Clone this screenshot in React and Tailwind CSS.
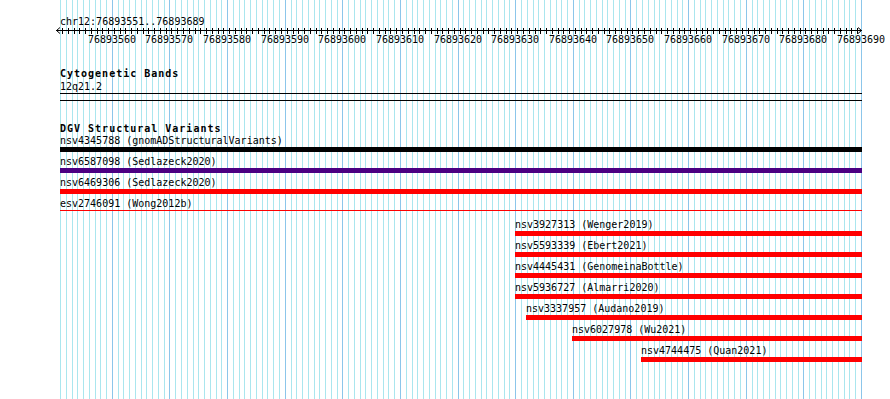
const FIRST = 76893551
const LAST = 76893689
const X0 = 60
const PX = 801 / (LAST - FIRST + 1)

const baseX = i => Math.round(X0 + i * PX)

const ROWS = [
  { label: 'nsv4345788 (gnomADStructuralVariants)', ml: 'ml-0', bar: 'bg-black h-[5px]' },
  { label: 'nsv6587098 (Sedlazeck2020)', ml: 'ml-0', bar: 'bg-[#4b0082] h-[5px]' },
  { label: 'nsv6469306 (Sedlazeck2020)', ml: 'ml-0', bar: 'bg-[#ff0000] h-[5px]' },
  { label: 'esv2746091 (Wong2012b)', ml: 'ml-0', bar: 'bg-[#ff0000] h-px' },
  { label: 'nsv3927313 (Wenger2019)', ml: 'ml-[455px]', bar: 'bg-[#ff0000] h-[5px]' },
  { label: 'nsv5593339 (Ebert2021)', ml: 'ml-[455px]', bar: 'bg-[#ff0000] h-[5px]' },
  { label: 'nsv4445431 (GenomeinaBottle)', ml: 'ml-[455px]', bar: 'bg-[#ff0000] h-[5px]' },
  { label: 'nsv5936727 (Almarri2020)', ml: 'ml-[455px]', bar: 'bg-[#ff0000] h-[5px]' },
  { label: 'nsv3337957 (Audano2019)', ml: 'ml-[466px]', bar: 'bg-[#ff0000] h-[5px]' },
  { label: 'nsv6027978 (Wu2021)', ml: 'ml-[512px]', bar: 'bg-[#ff0000] h-[5px]' },
  { label: 'nsv4744475 (Quan2021)', ml: 'ml-[581px]', bar: 'bg-[#ff0000] h-[5px]' },
]

const bases = Array.from({ length: LAST - FIRST + 2 }, (_, i) => i)
const majors = bases.filter(i => (FIRST + i) % 10 === 0)

function Guidelines() {
  return (
    <svg className="absolute inset-0" width="890" height="399" shapeRendering="crispEdges">
      {bases.map(i => {
        const major = (FIRST + i) % 10 === 0
        return (
          <line
            key={i}
            x1={baseX(i) + 0.5}
            x2={baseX(i) + 0.5}
            y1="0"
            y2="399"
            stroke={major ? '#8cc6ea' : '#aae6ee'}
            strokeWidth="1"
          />
        )
      })}
    </svg>
  )
}

function Ruler() {
  const right = baseX(LAST - FIRST + 1) - X0
  return (
    <div className="relative h-[18px]">
      <svg className="absolute left-0 top-0 overflow-visible" width="802" height="8" shapeRendering="crispEdges">
        <line x1="-4" x2={right + 1} y1="3.5" y2="3.5" stroke="#000" />
        {bases.slice(0, -1).map(i => (
          <line key={i} x1={baseX(i) - X0 + 2.5} x2={baseX(i) - X0 + 2.5} y1="1" y2="7" stroke="#000" />
        ))}
        <polyline points="0,0.5 -3.5,3.5 0,6.5" fill="none" stroke="#000" shapeRendering="auto" />
        <polyline points={`${right - 3},0.5 ${right + 0.5},3.5 ${right - 3},6.5`} fill="none" stroke="#000" shapeRendering="auto" />
      </svg>
      {majors.map(i => (
        <span key={i} className="absolute top-[8px] -translate-x-1/2 leading-[10px]" style={{ left: baseX(i) - X0 }}>
          {FIRST + i}
        </span>
      ))}
    </div>
  )
}

export default function App() {
  return (
    <div className="relative h-[399px] w-[890px] overflow-hidden bg-white text-black text-[10px] font-['DejaVu_Sans_Mono',monospace]">
      <Guidelines />
      <div className="relative w-[862px] pl-[60px] pt-[17px]">
        <p className="leading-[10px]">chr12:76893551..76893689</p>
        <Ruler />

        <p className="mt-[24px] font-bold tracking-[1px] leading-[10px]">Cytogenetic Bands</p>
        <p className="mt-[3px] leading-[10px]">12q21.2</p>
        <div className="mt-px h-[8px] border-y border-black" />

        <p className="mt-[23px] font-bold tracking-[1px] leading-[10px]">DGV Structural Variants</p>
        <div className="mt-[2px]">
          {ROWS.map(r => (
            <div key={r.label} className={`h-[21px] ${r.ml}`}>
              <p className="leading-[10px] whitespace-nowrap">{r.label}</p>
              <div className={`mt-px ${r.bar}`} />
            </div>
          ))}
        </div>
      </div>
    </div>
  )
}
